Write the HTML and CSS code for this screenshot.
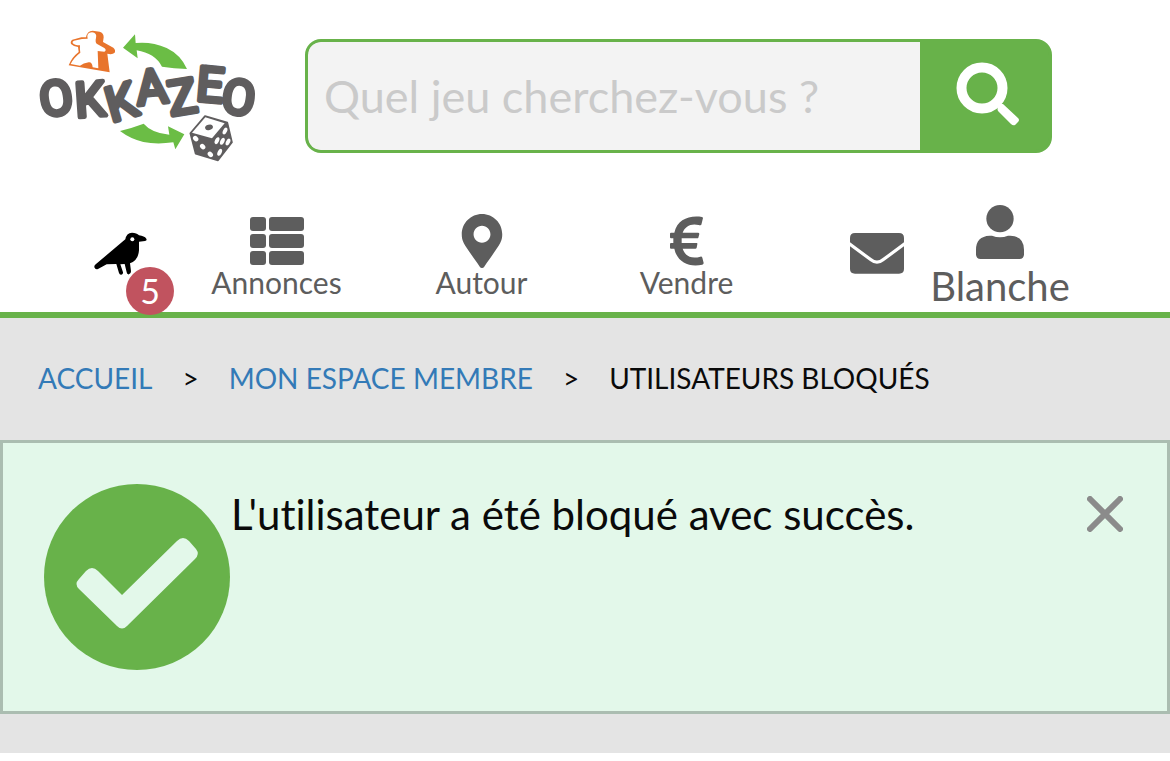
FILE: index.html
```html
<!DOCTYPE html>
<html lang="fr">
<head>
<meta charset="utf-8">
<meta name="viewport" content="width=device-width, initial-scale=1">
<title>Okkazeo - Utilisateurs bloqués</title>
<link rel="stylesheet" href="styles.css">
</head>
<body>
<header class="header">
  <div class="topbar">
    <a class="logo" href="#" aria-label="Okkazeo">
      <svg viewBox="0 0 705 450">
        <path fill="#e8742c" d="M168 52Q171 33 188 32L209 35Q221 38 221 52L219 66L250 83Q258 90 254 98Q247 105 232 101L239 157L116 136Q125 112 146 96Q145 87 144 81Q130 79 124 73Q119 65 127 59L154 52Z"/>
        <path fill="#fff" d="M173 56Q168 38 186 37Q202 39 198 54Q195 66 200 71L223 84Q231 91 223 95L203 93L205 145L188 142Q186 125 176 127Q160 130 150 137L122 132Q130 114 151 98Q149 86 150 76Q133 76 128 69Q126 64 132 62L156 57Z"/>
        <g fill="#6bbd45">
          <path d="M279 83L315 43L317 69Q365 64 410 84Q452 104 471 147Q431 146 396 140Q375 100 320 91L323 115Z"/>
          <path d="M270 333Q306 324 341 311Q365 339 418 344L414 319L463 343L436 388L430 367Q380 374 340 366Q300 356 270 333Z"/>
        </g>
        <text class="logo-word" x="36 138 244 323 422 496 570" y="291 292 307 256 287 241 275" rotate="-8 -4 -16 -6 -9 5 8">OKKAZEO</text>
        <path fill="#5f5d5e" stroke="#5f5d5e" stroke-width="5" stroke-linejoin="round" d="M525 288L592 308L606 367L564 421L497 401L481 340Z"/>
        <path fill="#fff" d="M526 292L584 310L546 355L486 338Z"/>
        <g fill="#fff">
          <ellipse cx="497" cy="356" rx="9" ry="7" transform="rotate(45 497 356)"/>
          <ellipse cx="518" cy="380" rx="9" ry="7" transform="rotate(45 518 380)"/>
          <ellipse cx="541" cy="403" rx="9" ry="7" transform="rotate(45 541 403)"/>
          <ellipse cx="585" cy="333" rx="11" ry="6" transform="rotate(-65 585 333)"/>
          <ellipse cx="561" cy="362" rx="11" ry="6" transform="rotate(-65 561 362)"/>
          <ellipse cx="577" cy="364" rx="11" ry="6" transform="rotate(-65 577 364)"/>
          <ellipse cx="594" cy="366" rx="11" ry="6" transform="rotate(-65 594 366)"/>
          <ellipse cx="569" cy="397" rx="11" ry="6" transform="rotate(-65 569 397)"/>
        </g>
        <ellipse cx="537" cy="322" rx="12" ry="8" fill="#5f5d5e" transform="rotate(-15 537 322)"/>
      </svg>
    </a>
    <form class="search" role="search">
      <input class="search-input" type="search" placeholder="Quel jeu cherchez-vous ?" aria-label="Rechercher un jeu">
      <button class="search-button" type="button" aria-label="Rechercher">
        <svg width="64" height="64" viewBox="0 0 64 64"><circle cx="26" cy="26" r="20.5" fill="none" stroke="#fff" stroke-width="10"/><path d="M47 42L62 56Q64 58 62 60L59 63Q57 64 55 62L42 49Q41 47 42 45L43 42Z" fill="#fff"/></svg>
      </button>
    </form>
  </div>
  <nav class="nav" aria-label="Navigation principale">
    <a class="nav-item nav-bird" href="#" aria-label="5 notifications">
      <svg width="54" height="44" viewBox="0 0 162 132"><path d="M94 22Q97 3 114 2Q128 2 135 10Q151 12 157 20Q160 27 153 27L135 29V55Q133 85 108 94L111 118Q111 126 105 127Q99 128 98 121L92 96L79 97L87 121Q88 127 82 128Q77 129 75 123L67 96L38 97L12 111Q4 114 1 106Q0 100 6 96Z"/><circle cx="115" cy="22" r="6" fill="#fff"/></svg>
      <span class="badge">5</span>
    </a>
    <a class="nav-item" href="#">
      <svg width="54" height="54" viewBox="0 0 54 54"><rect y="3" width="16" height="14" rx="3"/><rect x="19" y="3" width="35" height="14" rx="3"/><rect y="20" width="16" height="14" rx="3"/><rect x="19" y="20" width="35" height="14" rx="3"/><rect y="37" width="16" height="14" rx="3"/><rect x="19" y="37" width="35" height="14" rx="3"/></svg>
      Annonces
    </a>
    <a class="nav-item" href="#">
      <svg width="42" height="54" viewBox="0 0 384 512"><path d="M172.300 501.700C27 291 0 269.400 0 192 0 86 86 0 192 0s192 86 192 192c0 77.400-27 99-172.300 309.700-9.500 13.800-29.900 13.800-39.400 0zM192 272c44.200 0 80-35.800 80-80s-35.800-80-80-80-80 35.800-80 80 35.800 80 80 80z"/></svg>
      Autour
    </a>
    <a class="nav-item" href="#">
      <svg width="34" height="54" viewBox="0 0 102 162"><path d="M99 12L94 32Q90 35 86 33C63 27 45 37 38 56H85Q88 57 88 60L85 71Q84 73 81 73H35V87H80Q83 88 82 91L80 101Q79 104 76 104H38C45 126 64 136 91 128Q96 127 97 131L101 147Q101 151 97 152C55 161 21 143 13 104H3Q0 104 0 101V90Q0 87 3 87H10V73H3Q0 73 0 70V59Q0 56 3 56H13C22 16 58 3 96 9Q99 10 99 12Z"/></svg>
      Vendre
    </a>
    <a class="nav-item nav-mail" href="#" aria-label="Messages">
      <svg width="54" height="42" viewBox="0 0 162 126"><path d="M0 31V18Q0 3 15 3H147Q162 3 162 18V31L97 79Q81 92 65 79ZM0 43L60 87Q81 104 102 87L162 43V111Q162 125 147 125H15Q0 125 0 111Z"/></svg>
    </a>
    <a class="nav-item nav-user" href="#">
      <svg width="48" height="54" viewBox="0 0 144 162"><circle cx="72" cy="41" r="41"/><path d="M0 134Q0 94 41 92H48Q72 102 96 92H103Q144 94 144 134V148Q144 162 130 162H14Q0 162 0 148Z"/></svg>
      Blanche
    </a>
  </nav>
</header>
<main class="main">
  <nav aria-label="Fil d'Ariane">
    <ol class="crumbs">
      <li><a href="#">ACCUEIL</a></li>
      <li><a href="#">MON ESPACE MEMBRE</a></li>
      <li aria-current="page">UTILISATEURS BLOQUÉS</li>
    </ol>
  </nav>
  <div class="alert" role="status">
    <svg class="alert-icon" width="188" height="188" viewBox="0 0 188 188"><circle cx="94" cy="94" r="93" fill="#68b24a"/><path fill="#e3f8ea" d="M43 88Q49 82 55 88L79 112L134 58Q140 52 146 58L153 66Q157 71 152 76L84 143Q79 148 74 143L36 106Q31 101 36 96Z"/></svg>
    <p class="alert-text">L'utilisateur a été bloqué avec succès.</p>
    <button class="alert-close" type="button" aria-label="Fermer"><svg width="36" height="36" viewBox="0 0 36 36"><path d="M3 3L33 33M33 3L3 33" stroke="#8b8b8b" stroke-width="6" stroke-linecap="round"/></svg></button>
  </div>
</main>
</body>
</html>
```
FILE: styles.css
```css
* {
  box-sizing: border-box;
}

body {
  margin: 0;
  background: #fff;
  color: #0a0a0a;
  font-family: Lato, "Noto Sans", sans-serif;
  font-variant-ligatures: none;
}

svg {
  display: block;
}

a {
  color: #337ab7;
  text-decoration: none;
}

button {
  padding: 0;
  border: 0;
  background: none;
  cursor: pointer;
}

.header {
  border-bottom: 6px solid #68b24a;
}

.topbar {
  display: flex;
  align-items: flex-start;
  gap: 40px;
  padding: 20px 118px 0 30px;
}

.logo {
  flex: 0 0 235px;
}

.logo-word {
  fill: #5f5d5e;
  stroke: #5f5d5e;
  stroke-width: 14px;
  stroke-linejoin: round;
  font: 400 144px Roboto, sans-serif;
}

.search {
  display: flex;
  flex: 1;
  height: 114px;
  margin-top: 19px;
  overflow: hidden;
  border: 3px solid #68b24a;
  border-radius: 16px;
  background: #68b24a;
}

.search-input {
  flex: 1;
  min-width: 0;
  padding: 0 16px;
  border: 0;
  border-radius: 12px 0 0 12px;
  outline: 0;
  background: #f3f3f3;
  color: #333;
  font: 45px Lato, "Noto Sans", sans-serif;
}

.search-input::placeholder {
  color: #cacaca;
  opacity: 1;
}

.search-button {
  display: flex;
  flex: 0 0 129px;
  align-items: center;
  justify-content: center;
  padding: 0 0 4px 6px;
}

.nav {
  display: grid;
  grid-template-columns: 174fr 205fr 205fr 205fr 141fr 140fr 100fr;
  align-items: end;
  height: 142px;
}

.nav-item {
  display: flex;
  flex-direction: column;
  align-items: center;
  padding-bottom: 12px;
  color: #5d5d5d;
  fill: #5d5d5d;
  font-size: 30px;
  line-height: 36px;
}

.nav-item svg {
  margin-bottom: -4px;
}

.nav-bird {
  position: relative;
  align-items: flex-end;
  padding: 0 26px 40px 0;
  fill: #000;
}

.badge {
  position: absolute;
  right: 0;
  bottom: -3px;
  width: 48px;
  border-radius: 50%;
  background: #c1535f;
  color: #fff;
  font-size: 34px;
  line-height: 48px;
  text-align: center;
}

.nav-mail {
  align-items: flex-end;
  padding: 0 26px 42px 0;
}

.nav-user {
  padding-bottom: 2px;
  font-size: 40px;
  line-height: 48px;
}

.nav-user svg {
  margin-bottom: 3px;
}

.main {
  padding-bottom: 39px;
  background: #e4e4e4;
}

.crumbs {
  display: flex;
  margin: 0;
  padding: 42px 38px 44px;
  color: #0a0a0a;
  font-size: 28px;
  line-height: 36px;
  list-style: none;
}

.crumbs li + li::before {
  content: ">";
  margin: 0 30px;
  color: #0a0a0a;
}

.alert {
  display: flex;
  align-items: flex-start;
  padding: 40px;
  border: 3px solid #abbdb1;
  background: #e3f8ea;
}

.alert-icon {
  flex: none;
}

.alert-text {
  flex: 1;
  margin: 6px 0 0;
  font-size: 42px;
  line-height: 50px;
}

.alert-close {
  margin: 13px 4px 0 0;
}
```
